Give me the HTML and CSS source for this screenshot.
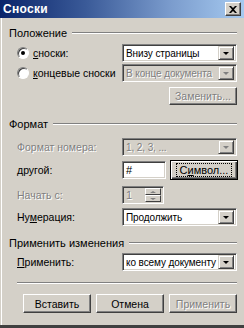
FILE: index.html
```html
<!DOCTYPE html>
<html lang="ru">
<head>
<meta charset="utf-8">
<title>Сноски</title>
<link rel="stylesheet" href="styles.css">
</head>
<body>
<div class="win">
  <div class="titlebar">
    <span class="title">Сноски</span>
    <span class="close"><svg width="8" height="7" viewBox="0 0 8 7"><path d="M0 0h2l2 2 2-2h2L5 3.5 8 7H6L4 5 2 7H0l3-3.5z" fill="#000"/></svg></span>
  </div>
  <div class="content">
    <div class="ghead h1"><span>Положение</span><i class="line"></i></div>
    <div class="row r1">
      <label class="lbl"><span class="radio on"></span><span><u>с</u>носки:</span></label>
      <div class="combo"><span class="val">Внизу страницы</span><span class="arrow"><i class="tri"></i></span></div>
    </div>
    <div class="row r2">
      <label class="lbl"><span class="radio"></span><span><u>к</u>онцевые сноски</span></label>
      <div class="combo dis"><span class="val">В конце документа</span><span class="arrow"><i class="tri"></i></span></div>
    </div>
    <div class="row r3">
      <span class="btn dis">Заменить...</span>
    </div>
    <div class="ghead h2"><span>Формат</span><i class="line"></i></div>
    <div class="row r4">
      <span class="lbl dis"><span>Формат номера:</span></span>
      <div class="combo dis"><span class="val">1, 2, 3, ...</span><span class="arrow"><i class="tri"></i></span></div>
    </div>
    <div class="row r5">
      <span class="lbl"><span><u>д</u>ругой:</span></span>
      <div class="field"><span class="val">#</span></div>
      <span class="btn focus"><span class="focusrect">С<u>и</u>мвол...</span></span>
    </div>
    <div class="row r6">
      <span class="lbl dis"><span>Начать с:</span></span>
      <div class="spin dis"><span class="val">1</span><span class="spinbtns"><span class="sb"><i class="up"></i></span><span class="sb"><i class="down"></i></span></span></div>
    </div>
    <div class="row r7">
      <span class="lbl"><span>Ну<u>м</u>ерация:</span></span>
      <div class="combo"><span class="val">Продолжить</span><span class="arrow"><i class="tri"></i></span></div>
    </div>
    <div class="ghead h3"><span>Применить изменения</span><i class="line"></i></div>
    <div class="row r8">
      <span class="lbl"><span><u>П</u>рименить:</span></span>
      <div class="combo"><span class="val">ко всему документу</span><span class="arrow"><i class="tri"></i></span></div>
    </div>
    <div class="sep"></div>
    <div class="buttons">
      <span class="btn">Вставить</span>
      <span class="btn">Отмена</span>
      <span class="btn dis">Применить</span>
    </div>
  </div>
</div>
</body>
</html>
```

FILE: styles.css
```css
* { box-sizing: border-box; }
html, body { margin: 0; padding: 0; }
body {
  width: 244px;
  height: 328px;
  overflow: hidden;
  background: #d4d0c8;
  font: 10px "Liberation Sans", Arial, sans-serif;
  color: #000;
}
.win {
  height: 328px;
  display: flex;
  flex-direction: column;
  border-bottom: 3px solid #404040;
}
.titlebar {
  height: 18px;
  flex: none;
  display: flex;
  align-items: center;
  justify-content: space-between;
  padding: 0 3px 0 3px;
  background: linear-gradient(to right, #0a246a 0%, #3a5a98 35%, #7b9ccd 70%, #a6caf0 100%);
}
.title {
  color: #fff;
  font-weight: bold;
  font-size: 12px;
  letter-spacing: 0.3px;
}
.close {
  width: 16px;
  height: 14px;
  display: flex;
  align-items: center;
  justify-content: center;
  background: #d4d0c8;
  border-top: 1px solid #fff;
  border-left: 1px solid #fff;
  border-right: 1px solid #404040;
  border-bottom: 1px solid #404040;
  box-shadow: inset -1px -1px #808080;
}
.content {
  flex: 1;
  display: flex;
  flex-direction: column;
  padding: 0 7px 0 7px;
  border-left: 1px solid #fff;
  margin-left: 1px;
}
.ghead {
  height: 14px;
  display: flex;
  align-items: center;
  gap: 5px;
  flex: none;
  font-size: 11px;
}
.ghead .line {
  flex: 1;
  height: 2px;
  border-top: 1px solid #808080;
  border-bottom: 1px solid #fff;
}
.h1 { margin-top: 8px; }
.h2 { margin-top: 12px; }
.h3 { margin-top: 10px; }
.row {
  display: flex;
  align-items: center;
  flex: none;
  height: 18px;
  padding-left: 8px;
}
.r1 { margin-top: 4px; }
.r2 { margin-top: 2px; }
.r3 { margin-top: 5px; justify-content: flex-end; }
.r4 { margin-top: 7px; }
.r5 { margin-top: 4px; height: 20px; }
.r6 { margin-top: 6px; }
.r7 { margin-top: 4px; }
.r8 { margin-top: 3px; }
.lbl {
  width: 105px;
  flex: none;
  display: flex;
  align-items: center;
  gap: 4px;
  font-size: 10.5px;
}
.dis { color: #808080; text-shadow: 1px 1px 0 #fff; }
.radio {
  width: 12px;
  height: 12px;
  border-radius: 50%;
  background: #fff;
  border: 1px solid;
  border-color: #808080 #fff #fff #808080;
  box-shadow: inset 1px 1px #404040;
  display: flex;
  align-items: center;
  justify-content: center;
  flex: none;
}
.radio.on::after {
  content: "";
  width: 4px;
  height: 4px;
  border-radius: 50%;
  background: #000;
}
.combo, .field, .spin {
  height: 18px;
  display: flex;
  align-items: center;
  background: #fff;
  border: 1px solid;
  border-color: #808080 #fff #fff #808080;
  box-shadow: inset 1px 1px #404040, inset -1px -1px #d4d0c8;
  padding: 2px;
  flex: none;
  font-size: 10px;
  letter-spacing: -0.1px;
}
.combo { width: 115px; }
.combo.dis, .spin.dis { background: #d4d0c8; }
.val { flex: 1; padding-left: 1px; white-space: nowrap; overflow: hidden; }
.arrow {
  width: 16px;
  height: 14px;
  background: #d4d0c8;
  border: 1px solid;
  border-color: #d4d0c8 #404040 #404040 #d4d0c8;
  box-shadow: inset 1px 1px #fff, inset -1px -1px #808080;
  display: flex;
  align-items: center;
  justify-content: center;
  flex: none;
}
.tri {
  width: 0;
  height: 0;
  border-left: 3px solid transparent;
  border-right: 3px solid transparent;
  border-top: 3px solid #000;
}
.combo.dis .tri { border-top-color: #808080; }
.field { width: 44px; font-size: 11px; }
.spin { width: 42px; font-size: 11px; }
.spinbtns {
  width: 16px;
  height: 14px;
  display: flex;
  flex-direction: column;
  flex: none;
}
.sb {
  flex: 1;
  background: #d4d0c8;
  border: 1px solid;
  border-color: #fff #404040 #404040 #fff;
  display: flex;
  align-items: center;
  justify-content: center;
}
.up, .down { width: 0; height: 0; border-left: 3px solid transparent; border-right: 3px solid transparent; }
.up { border-bottom: 2px solid #808080; }
.down { border-top: 2px solid #808080; }
.btn {
  width: 68px;
  height: 18px;
  display: flex;
  align-items: center;
  justify-content: center;
  background: #d4d0c8;
  border: 1px solid;
  border-color: #fff #404040 #404040 #fff;
  box-shadow: inset -1px -1px #808080;
  flex: none;
  white-space: nowrap;
  font-size: 10.5px;
}
.btn.focus {
  margin-left: 4px;
  height: 20px;
  border: 1px solid #000;
  box-shadow: inset 1px 1px #fff, inset -1px -1px #404040, inset -2px -2px #808080;
  font-size: 11px;
}
.focusrect {
  border: 1px dotted #000;
  padding: 0 3px;
  line-height: 12px;
}
.sep {
  margin-top: 11px;
  margin-left: 8px;
  height: 2px;
  border-top: 1px solid #808080;
  border-bottom: 1px solid #fff;
  flex: none;
}
.buttons {
  margin-top: 10px;
  display: flex;
  justify-content: flex-end;
  gap: 5px;
  flex: none;
}
.buttons .btn { height: 19px; }
```
